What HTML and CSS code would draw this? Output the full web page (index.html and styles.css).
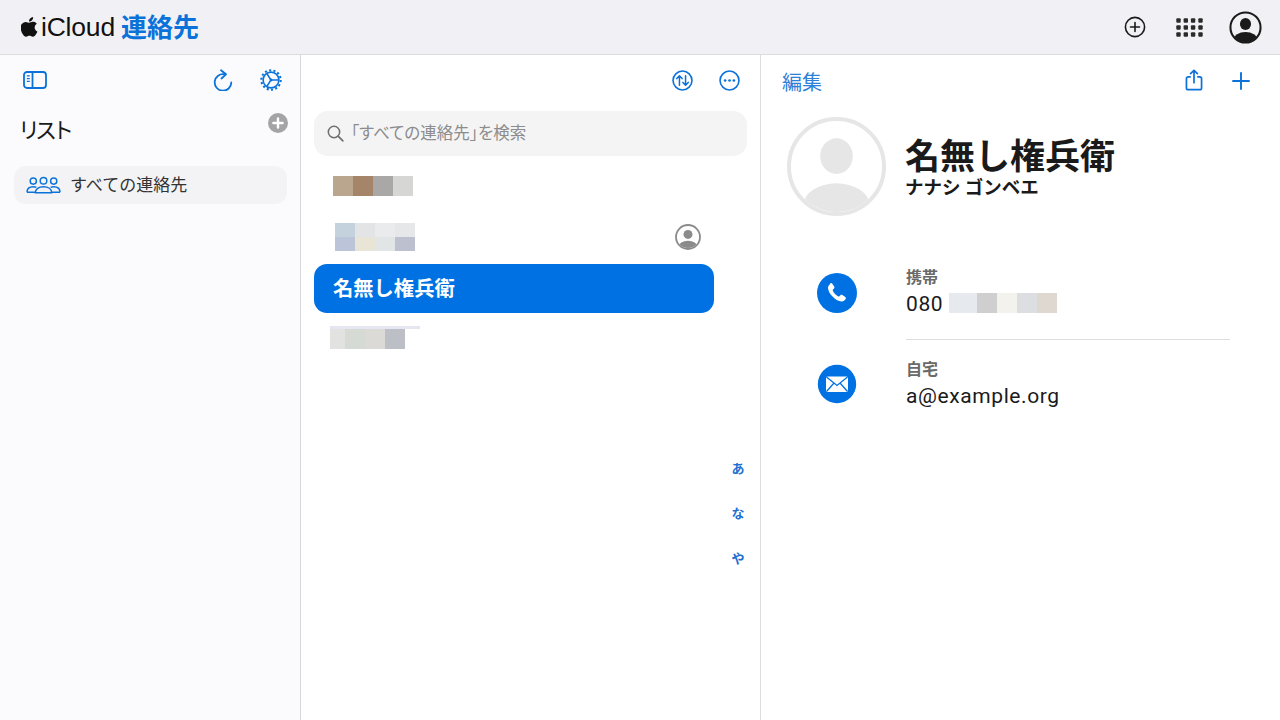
FILE: index.html
```html
<!DOCTYPE html>
<html lang="ja">
<head>
<meta charset="utf-8">
<title>iCloud 連絡先</title>
<link rel="stylesheet" href="styles.css">
</head>
<body>
<header class="topbar">
  <div class="brand">
    <svg class="apple" viewBox="3.4 1.500 17 21" width="17" height="20" preserveAspectRatio="none"><path fill="#111" d="M17.05 12.54c-.03-2.6 2.12-3.85 2.22-3.91-1.21-1.77-3.09-2.01-3.76-2.04-1.6-.16-3.12.94-3.93.94-.81 0-2.06-.92-3.39-.89-1.74.03-3.35 1.01-4.25 2.57-1.81 3.14-.46 7.79 1.3 10.34.86 1.25 1.89 2.65 3.24 2.6 1.3-.05 1.79-.84 3.36-.84s2.01.84 3.39.82c1.4-.03 2.29-1.27 3.14-2.53.99-1.45 1.4-2.86 1.42-2.93-.03-.01-2.73-1.05-2.74-4.13zM14.47 4.88c.72-.87 1.2-2.08 1.07-3.28-1.03.04-2.28.69-3.02 1.55-.66.77-1.24 2-1.09 3.18 1.15.09 2.32-.58 3.04-1.45z"/></svg>
    <span class="brand-icloud">iCloud</span>
    <span class="brand-app">連絡先</span>
  </div>
  <div class="top-actions">
    <svg class="ic-add" viewBox="0 0 22 22" width="22" height="22"><circle cx="11" cy="11" r="9.6" fill="none" stroke="#1a1a1a" stroke-width="1.6"/><path d="M11 6.5v9M6.5 11h9" stroke="#1a1a1a" stroke-width="1.6" stroke-linecap="round"/></svg>
    <svg class="ic-grid" viewBox="0 0 27 19" width="27" height="19"><g fill="#2a2a2a"><rect x=".3" y=".3" width="4.400" height="4.400" rx="1"/><rect x="7.600" y=".3" width="4.400" height="4.400" rx="1"/><rect x="14.900" y=".3" width="4.400" height="4.400" rx="1"/><rect x="22.300" y=".3" width="4.400" height="4.400" rx="1"/><rect x=".3" y="7.300" width="4.400" height="4.400" rx="1"/><rect x="7.600" y="7.300" width="4.400" height="4.400" rx="1"/><rect x="14.900" y="7.300" width="4.400" height="4.400" rx="1"/><rect x="22.300" y="7.300" width="4.400" height="4.400" rx="1"/><rect x=".3" y="14.300" width="4.400" height="4.400" rx="1"/><rect x="7.600" y="14.300" width="4.400" height="4.400" rx="1"/><rect x="14.900" y="14.300" width="4.400" height="4.400" rx="1"/><rect x="22.300" y="14.300" width="4.400" height="4.400" rx="1"/></g></svg>
    <svg class="ic-user" viewBox="0 0 32 32" width="33" height="33"><defs><clipPath id="uc"><circle cx="16" cy="16" r="14.2"/></clipPath></defs><circle cx="16" cy="16" r="14.6" fill="#f1f1f5" stroke="#1a1a1a" stroke-width="2"/><g clip-path="url(#uc)" fill="#1a1a1a"><ellipse cx="16" cy="12.6" rx="5.4" ry="5.9"/><ellipse cx="16" cy="28" rx="11.5" ry="7.6"/></g></svg>
  </div>
</header>

<main class="columns">
  <aside class="sidebar">
    <div class="side-tools">
      <svg viewBox="0 0 24 18" width="24" height="18"><rect x="1" y="1" width="22" height="16" rx="3" fill="none" stroke="#0b72d9" stroke-width="1.800"/><path d="M9.500 1v16" stroke="#0b72d9" stroke-width="1.800"/><path d="M3.800 4.800h3M3.800 7.600h3M3.800 10.400h3" stroke="#0b72d9" stroke-width="1.300"/></svg>
      <span class="spacer"></span>
      <svg class="t-refresh" viewBox="0 0 20 22" width="20" height="22"><path d="M11.500 5.300A8.300 8.300 0 1 0 18.300 13.500" fill="none" stroke="#0b72d9" stroke-width="1.800" stroke-linecap="round"/><path d="M8 1.200L13 5.300 8.500 9.500" fill="none" stroke="#0b72d9" stroke-width="1.800" stroke-linecap="round" stroke-linejoin="round"/></svg>
      <svg class="t-gear" viewBox="0 0 22 22" width="22" height="22"><circle cx="11" cy="11" r="7.900" fill="none" stroke="#0b72d9" stroke-width="1.600"/><circle cx="11" cy="11" r="9.700" fill="none" stroke="#0b72d9" stroke-width="2" stroke-dasharray="2.100 2.250"/><path d="M6.800 4.500L11 11l-4.200 6.500M11 11h7.500" fill="none" stroke="#0b72d9" stroke-width="1.500"/><circle cx="11" cy="11" r="1.400" fill="#0b72d9"/></svg>
    </div>
    <div class="list-head">
      <h2 class="list-title">リスト</h2>
      <svg class="list-add" viewBox="0 0 20 20" width="20" height="20"><circle cx="10" cy="10" r="10" fill="#a4a4a6"/><path d="M10 5.400v9.200M5.400 10h9.200" stroke="#fff" stroke-width="2.400" stroke-linecap="round"/></svg>
    </div>
    <div class="list-item">
      <svg viewBox="0 0 36 18" width="35" height="18"><g fill="none" stroke="#0b72d9" stroke-width="1.500"><circle cx="7.500" cy="5" r="3.200"/><circle cx="18" cy="4.600" r="3.400"/><circle cx="28.500" cy="5" r="3.200"/><path d="M1 16.400c0-3.600 2.600-5.600 6.500-5.600 1.200 0 2.300.2 3.200.6M35 16.400c0-3.600-2.600-5.600-6.500-5.600-1.200 0-2.300.2-3.200.6"/><path d="M9.600 17c0-3.800 3.400-6.200 8.400-6.200s8.400 2.400 8.400 6.200H9.600zM1 16.400h8.600M26.400 16.400H35"/></g></svg>
      <span class="list-label">すべての連絡先</span>
    </div>
  </aside>

  <section class="contacts">
    <div class="contact-tools">
      <svg viewBox="0 0 22 22" width="21" height="21"><circle cx="11" cy="11" r="9.900" fill="none" stroke="#0b72d9" stroke-width="1.700"/><path d="M7.800 16V6.400M5 9l2.800-3 2.800 3M14.200 6v9.600M11.400 13l2.800 3 2.800-3" fill="none" stroke="#0b72d9" stroke-width="1.600" stroke-linecap="round" stroke-linejoin="round"/></svg>
      <svg viewBox="0 0 22 22" width="21" height="21"><circle cx="11" cy="11" r="9.900" fill="none" stroke="#0b72d9" stroke-width="1.700"/><g fill="#0b72d9"><circle cx="6.400" cy="11" r="1.400"/><circle cx="11" cy="11" r="1.400"/><circle cx="15.600" cy="11" r="1.400"/></g></svg>
    </div>
    <div class="search">
      <svg viewBox="0 0 18 18" width="17" height="17"><circle cx="7.400" cy="7.400" r="6" fill="none" stroke="#6f6f6f" stroke-width="1.600"/><path d="M11.800 11.800L16.800 16.800" stroke="#6f6f6f" stroke-width="1.800" stroke-linecap="round"/></svg>
      <span class="search-text">「すべての連絡先」を検索</span>
    </div>
    <div class="row row-a">
      <div class="mosaic m-a">
        <i class="c1"></i><i class="c2"></i><i class="c3"></i><i class="c4"></i>
      </div>
    </div>
    <div class="row row-b">
      <div class="mosaic m-b">
        <i class="b1"></i><i class="b2"></i><i class="b3"></i><i class="b4"></i>
        <i class="b5"></i><i class="b6"></i><i class="b7"></i><i class="b8"></i>
      </div>
      <svg class="me-badge" viewBox="0 0 26 26" width="26" height="26"><defs><clipPath id="mc"><circle cx="13" cy="13" r="11"/></clipPath></defs><circle cx="13" cy="13" r="12" fill="#fff" stroke="#8b8b8b" stroke-width="1.800"/><g clip-path="url(#mc)" fill="#8b8b8b"><circle cx="13" cy="10.400" r="4.500"/><ellipse cx="13" cy="23" rx="9.500" ry="6.200"/></g></svg>
    </div>
    <div class="row-selected">名無し権兵衛</div>
    <div class="row-d">
      <div class="mosaic m-d">
        <i class="d1"></i><i class="d2"></i><i class="d3"></i><i class="d4"></i>
      </div>
    </div>
    <nav class="index">
      <span>あ</span><span>な</span><span>や</span>
    </nav>
  </section>

  <section class="detail">
    <div class="detail-tools">
      <span class="edit">編集</span>
      <span class="spacer"></span>
      <svg class="t-share" viewBox="0 0 20 24" width="18" height="22"><path d="M6.400 8.600H3.600a2 2 0 0 0-2 2v10.200a2 2 0 0 0 2 2h12.800a2 2 0 0 0 2-2V10.600a2 2 0 0 0-2-2h-2.800" fill="none" stroke="#0b72d9" stroke-width="1.900"/><path d="M10 15V1.400M6.200 5L10 1.200 13.800 5" fill="none" stroke="#0b72d9" stroke-width="1.900" stroke-linecap="round" stroke-linejoin="round"/></svg>
      <svg class="t-plus" viewBox="0 0 18 18" width="18" height="18"><path d="M9 1v16M1 9h16" stroke="#0b72d9" stroke-width="1.900" stroke-linecap="round"/></svg>
    </div>
    <div class="person">
      <svg class="avatar" viewBox="0 0 100 100" width="99" height="99"><defs><clipPath id="ac"><circle cx="50" cy="50" r="46"/></clipPath></defs><circle cx="50" cy="50" r="48" fill="#fff" stroke="#e6e6e6" stroke-width="4"/><g clip-path="url(#ac)" fill="#e6e6e6"><ellipse cx="50" cy="39.500" rx="16.500" ry="18"/><ellipse cx="50" cy="88" rx="33" ry="21"/></g></svg>
      <div class="person-names">
        <h1 class="name">名無し権兵衛</h1>
        <div class="kana">ナナシ ゴンベエ</div>
      </div>
    </div>
    <div class="field field-phone">
      <svg class="circle-ic" viewBox="0 0 40 40" width="40" height="40"><circle cx="20" cy="20" r="20" fill="#0071e3"/><path fill="#fff" d="M13.200 10.400c.7-.5 1.600-.4 2.100.3l1.900 2.900c.4.700.3 1.500-.2 2l-1 1c-.3.3-.3.7-.2 1.100.6 1.300 1.300 2.300 2.200 3.300 1 1 2 1.800 3.300 2.400.4.200.8.100 1.100-.2l1-1c.5-.5 1.300-.6 2-.2l2.900 1.900c.7.500.8 1.500.3 2.100-1 1.300-2.200 2.700-4 2.600-2.900-.2-6-2-8.800-4.800-2.800-2.800-4.600-5.900-4.800-8.800-.1-1.800 1-3.100 2.200-4.100z"/></svg>
      <div class="field-body has-rule">
        <div class="field-label">携帯</div>
        <div class="field-value">
          <span>080</span>
          <div class="mosaic m-p"><i class="p1"></i><i class="p2"></i><i class="p3"></i><i class="p4"></i><i class="p5"></i></div>
        </div>
      </div>
    </div>
    <div class="field field-mail">
      <svg class="circle-ic mail-ic" viewBox="0 0 40 40" width="40" height="40"><circle cx="20" cy="20" r="19.200" fill="#0071e3"/><rect x="9" y="12.500" width="22" height="15.500" rx="1.500" fill="#fff"/><path d="M9.500 13l10.500 8.500L30.500 13M9.500 27.500l7.500-8.500M30.500 27.500l-7.500-8.500" fill="none" stroke="#0071e3" stroke-width="1.300"/></svg>
      <div class="field-body">
        <div class="field-label">自宅</div>
        <div class="field-value">a@example.org</div>
      </div>
    </div>
  </section>
</main>
</body>
</html>
```
FILE: styles.css
```css
* { box-sizing: border-box; }
html, body { margin: 0; height: 100%; }
body {
  width: 1280px;
  height: 720px;
  overflow: hidden;
  background: #fff;
  color: #1a1a1a;
  font-family: "Liberation Sans", "Noto Sans CJK JP", sans-serif;
  display: flex;
  flex-direction: column;
}
svg { display: block; flex: none; }
.spacer { flex: 1; }

.topbar {
  height: 55px;
  flex: none;
  background: #f1f1f5;
  border-bottom: 1px solid #dcdcdf;
  display: flex;
  align-items: center;
  justify-content: space-between;
  padding: 0 18px 0 21px;
}
.brand { display: flex; align-items: center; }
.apple { margin-top: -1px; }
.brand-icloud { font-size: 26.500px; letter-spacing: -0.200px; margin-left: 3px; color: #111; }
.brand-app { font-size: 26px; font-weight: 700; color: #0b72d9; margin: -2px 0 0 6px; font-family: "Noto Sans CJK JP", sans-serif; line-height: 30px; }
.top-actions { display: flex; align-items: center; }
.ic-grid { margin-left: 30px; }
.ic-user { margin-left: 26px; }

.columns { flex: 1; display: flex; min-height: 0; }

.sidebar {
  width: 301px;
  flex: none;
  background: #fbfbfe;
  border-right: 1px solid #d8d8dc;
  padding: 0 13px 0 14px;
}
.side-tools { display: flex; align-items: center; height: 51px; padding: 0 0 1px 9px; }
.t-refresh { margin-right: 27px; }
.t-gear { margin-right: 5px; }
.list-head { display: flex; justify-content: space-between; align-items: flex-start; height: 60px; padding: 7px 0 0 4px; }
.list-title { margin: -2px 0 0; font-size: 22px; font-weight: 400; letter-spacing: -5px; line-height: 34px; font-family: "Noto Sans CJK JP", sans-serif; color: #1a1a1a; }
.list-add { margin-right: -1px; }
.list-item {
  height: 38px;
  background: #f3f3f5;
  border-radius: 12px;
  display: flex;
  align-items: center;
  padding: 0 0 0 12px;
  gap: 9px;
  font-size: 17px;
  font-family: "Noto Sans CJK JP", sans-serif;
  color: #333;
}
.list-label { margin-top: -4px; }

.contacts {
  width: 460px;
  flex: none;
  border-right: 1px solid #dcdcdf;
  position: relative;
  padding: 0 13px;
}
.contact-tools { display: flex; justify-content: flex-end; gap: 26px; height: 51px; padding: 15px 7px 0 0; align-items: flex-start; }
.search {
  margin-top: 5px;
  height: 45px;
  background: #f4f4f5;
  border-radius: 14px;
  display: flex;
  align-items: center;
  padding-left: 13px;
  gap: 7px;
  font-size: 16.500px;
  font-family: "Noto Sans CJK JP", sans-serif;
  color: #8c8c8c;
}
.search-text { margin-top: -4px; font-feature-settings: "palt"; }
.mosaic { display: grid; }
.mosaic i { display: block; }
.row { display: flex; }
.row-a { height: 58px; padding: 20px 0 18px 19px; }
.row-b { height: 50px; padding: 9px 46px 0 21px; justify-content: space-between; align-items: flex-start; }
.m-a { grid-template-columns: repeat(4, 20px); grid-auto-rows: 20px; }
.c1 { background: #baa58f; }
.c2 { background: #a58569; }
.c3 { background: #a9a8a6; }
.c4 { background: #d6d6d4; }
.m-b { grid-template-columns: repeat(4, 20px); grid-auto-rows: 14px; }
.b1 { background: #c4d2de; }
.b2 { background: #e2e4e6; }
.b3 { background: #e9ebec; }
.b4 { background: #e6e7e8; }
.b5 { background: #bcc4d9; }
.b6 { background: #e9e5d6; }
.b7 { background: #e2e5e5; }
.b8 { background: #bcc0cf; }
.me-badge { margin-top: 1px; }
.row-selected {
  width: 400px;
  height: 49px;
  background: #0071e3;
  border-radius: 13px;
  color: #fff;
  font-size: 20.300px;
  font-weight: 700;
  font-family: "Noto Sans CJK JP", sans-serif;
  line-height: 46px;
  padding-left: 19px;
}
.row-d { padding: 13px 0 0 16px; }
.m-d { grid-template-columns: 15px 20px 20px 20px; grid-auto-rows: 20px; width: 90px; border-top: 3px solid #e6e6f2; }
.d1 { background: #e2e3e0; }
.d2 { background: #d6dad5; }
.d3 { background: #dcdad6; }
.d4 { background: #bcc0c6; }
.index {
  position: absolute;
  left: 429px;
  top: 404px;
  width: 16px;
  display: flex;
  flex-direction: column;
  align-items: center;
  gap: 27px;
  font-size: 13px;
  line-height: 18px;
  font-weight: 700;
  font-family: "Noto Sans CJK JP", sans-serif;
  color: #1e6fd0;
}

.detail { flex: 1; min-width: 0; padding: 0 30px 0 0; }
.detail-tools { display: flex; align-items: center; height: 52px; padding-left: 21px; }
.edit { font-size: 20px; color: #2f80d8; font-family: "Noto Sans CJK JP", sans-serif; line-height: 54px; padding-top: 2px; }
.t-share { margin-right: 29px; margin-top: -3px; }
.t-plus { margin-top: -1px; }
.person { display: flex; align-items: flex-start; padding-left: 26px; height: 149px; margin-top: 10px; }
.person-names { margin-left: 19px; padding-top: 15px; }
.name { margin: 0; font-size: 35px; font-weight: 700; line-height: 44px; font-family: "Noto Sans CJK JP", sans-serif; color: #1a1a1a; }
.kana { font-size: 18.500px; font-weight: 700; line-height: 20px; font-family: "Noto Sans CJK JP", sans-serif; color: #1a1a1a; }
.field { display: flex; align-items: flex-start; padding-left: 56px; }
.field-phone { height: 92px; }
.circle-ic { margin-top: 7px; }
.mail-ic { margin-top: 6px; }
.field-body { margin-left: 49px; flex: 1; margin-right: 20px; }
.has-rule { border-bottom: 1px solid #dedee0; height: 74px; }
.field-label { font-size: 16px; font-weight: 700; line-height: 22px; margin-top: -1px; color: #6a6a6a; font-family: "Noto Sans CJK JP", sans-serif; }
.field-value { font-family: "Roboto", sans-serif; font-size: 21px; line-height: 27px; margin-top: 4px; letter-spacing: 0.600px; display: flex; align-items: center; gap: 6px; color: #1a1a1a; }
.m-p { grid-template-columns: 28px 20px 20px 20px 20px; grid-auto-rows: 20px; margin-top: -3px; }
.p1 { background: #e6eaee; }
.p2 { background: #cfcfd0; }
.p3 { background: #f3f2ec; }
.p4 { background: #dcdee2; }
.p5 { background: #dfd8d0; }
```
